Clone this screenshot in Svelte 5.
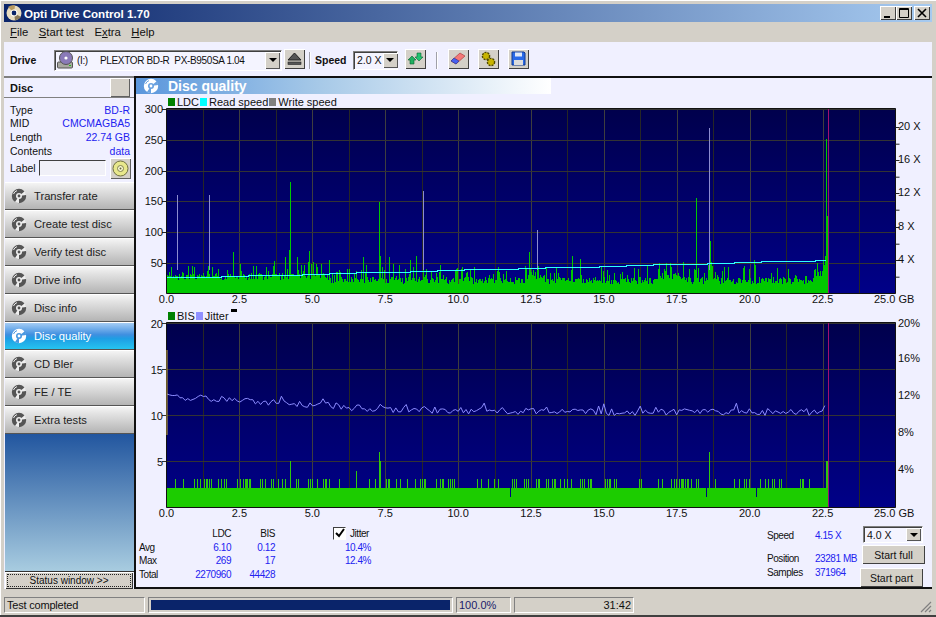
<script>
    // seeded so both charts come out the same on every render
    function rng(seed) {
        return () => {
            seed = (seed + 0x6d2b79f5) | 0;
            let t = Math.imul(seed ^ (seed >>> 15), 1 | seed);
            t = (t + Math.imul(t ^ (t >>> 7), 61 | t)) ^ t;
            return ((t ^ (t >>> 14)) >>> 0) / 4294967296;
        };
    }

    const left = 166.5, right = 895.5, endX = 828;
    const top1 = 108.5, bot1 = 293.5, top2 = 322.5, bot2 = 507.5;
    const gbX = (gb) => left + gb * 29.16;

    const gridV = Array.from({ length: 19 }, (_, i) => ({ x: Math.round(gbX((i + 1) * 1.25)) + 0.5, major: i % 2 === 1 }));
    const xLabels = ['0.0', '2.5', '5.0', '7.5', '10.0', '12.5', '15.0', '17.5', '20.0', '22.5'].map((t, i) => ({ t, x: gbX(i * 2.5) }));

    const ldcTicks = [50, 100, 150, 200, 250, 300].map((v) => ({ v, y: Math.round(bot1 - v * 0.615) + 0.5 }));
    const speedTicks = [4, 8, 12, 16, 20].map((v) => ({ v, y: Math.round(bot1 - v * 8.34) + 0.5 }));
    const bisTicks = [5, 10, 15, 20].map((v) => ({ v, y: Math.round(bot2 - v * 9.25) + 0.5 }));
    const jitterTicks = [4, 8, 12, 16, 20].map((v) => ({ v, y: Math.round(bot2 - v * 9.25) + (v === 20 ? 4 : 1.5) }));

    function buildLdc() {
        const r = rng(17);
        let d = '';
        const spikes = { 290: 180, 289: 70, 379: 148, 380: 60, 696: 155, 709: 85, 710: 85, 711: 50, 708: 45, 825: 60, 826: 250, 827: 125, 537: 40, 285: 58, 274: 52, 278: 28, 393: 30, 423: 40, 535: 22, 419: 26, 595: 26, 665: 36, 662: 32, 650: 25, 806: 28 };
        for (let x = 167; x < 828; x++) {
            let h = 9 + r() * 7;
            const p = r();
            if (p > 0.96) h += 14 + r() * 14;
            else if (p > 0.75) h += 5 + r() * 9;
            if (x < 330) h += 4;
            if (x > 525 && x < 545) h += 4;
            if (x > 655 && x < 685) h += 4;
            if (x > 815) h += 7;
            if (spikes[x]) h = spikes[x] * 0.615 > h ? spikes[x] * 0.615 : h;
            d += `M${x + 0.5} 293V${(293 - h).toFixed(0)}`;
        }
        return d;
    }

    const paleLines = [
        { x: 177.5, y: 195 }, { x: 209.5, y: 195 }, { x: 423.5, y: 191 },
        { x: 537.5, y: 230 }, { x: 709.5, y: 128 }
    ];

    function buildSpeed() {
        let d = `M167 277`;
        let y = 277.5, x = 167;
        while (x < 826) {
            const next = Math.min(x + 25 + (x % 3), 826);
            d += `H${next}`;
            x = next;
            y -= 0.73;
            if (x < 826) d += `V${Math.round(y) + 0.5}`;
        }
        return d;
    }

    function buildBis() {
        const r = rng(5);
        const tall = { 290: 461, 356: 471, 379: 452, 380: 461, 709: 452 };
        const notch = [266, 279, 706, 756, 510, 640];
        let base = '', high = '';
        let run = 0;
        for (let x = 167; x < 828; x++) {
            if (x >= 826) {
                high += `M${x + 0.5} 488V461`;
                base += `M${x + 0.5} 507V488`;
                continue;
            }
            base += `M${x + 0.5} 507V${notch.includes(x) ? 497 : 488}`;
            if (tall[x]) high += `M${x + 0.5} 488V${tall[x]}`;
            else if (run > 0) {
                high += `M${x + 0.5} 488V479`;
                run--;
            } else if (r() > 0.8) {
                high += `M${x + 0.5} 488V479`;
                run = r() > 0.6 ? 1 + Math.floor(r() * 2) : 0;
                x += 1;
                base += `M${x + 0.5} 507V488`;
            }
        }
        return { base, high };
    }

    function buildJitter() {
        const r = rng(29);
        let pts = [];
        for (let x = 167; x <= 825; x += 2.6) {
            let mid = x < 380 ? 396 + (x - 167) * 0.061 : x < 560 ? 409 + (x - 380) * 0.017 : 412;
            let y = mid + (r() - 0.5) * 7;
            if (r() > 0.93) y -= 3 + r() * 3;
            pts.push(`${x.toFixed(1)},${y.toFixed(1)}`);
        }
        return pts.join(' ');
    }

    const ldcPath = buildLdc();
    const speedPath = buildSpeed();
    const bis = buildBis();
    const jitterPts = buildJitter();

    const discInfo = [
        { label: 'Type', value: 'BD-R' },
        { label: 'MID', value: 'CMCMAGBA5' },
        { label: 'Length', value: '22.74 GB' },
        { label: 'Contents', value: 'data' }
    ];

    const tests = ['Transfer rate', 'Create test disc', 'Verify test disc', 'Drive info', 'Disc info', 'Disc quality', 'CD Bler', 'FE / TE', 'Extra tests'];
    const current = 'Disc quality';

    const stats = [
        { label: '', ldc: 'LDC', bis: 'BIS', head: true },
        { label: 'Avg', ldc: '6.10', bis: '0.12' },
        { label: 'Max', ldc: '269', bis: '17' },
        { label: 'Total', ldc: '2270960', bis: '44428' }
    ];
</script>

<style>
    :global(body) {
        margin: 0;
        background: #d4d0c8;
    }

    .window {
        box-sizing: border-box;
        display: flex;
        flex-direction: column;
        width: 936px;
        height: 617px;
        padding: 4px 4px 4px 4px;
        overflow: hidden;

        font-family: "Liberation Sans", Arial, sans-serif;
        font-size: 11px;
        color: #111;
        background: #d4d0c8;
        border-bottom: 2px solid #404040;
        box-shadow: inset 1px 1px 0 #fff;
    }

    .titlebar {
        flex: 0 0 18px;
        display: flex;
        align-items: center;
        gap: 2px;
        padding-left: 2px;

        font-size: 11.6px;
        font-weight: bold;
        color: #fff;
        background: linear-gradient(to right, #0a246a, #a6caf0);
    }
    .titlebar .name {
        flex: 1 1 auto;
    }
    .winbtns {
        display: flex;
        margin-right: 2px;
    }
    .winbtn {
        box-sizing: border-box;
        display: block;
        width: 16px;
        height: 14px;
        background: #d4d0c8;
        box-shadow: inset 1px 1px 0 #fff, inset -1px -1px 0 #404040;
    }
    .winbtn + .winbtn:last-child {
        margin-left: 2px;
    }

    .menubar {
        flex: 0 0 20px;
        display: flex;
        align-items: center;
        gap: 10.5px;
        padding-left: 6px;

        font-size: 11.3px;
    }
    .menubar u {
        text-decoration: underline;
    }

    .toolbar {
        flex: 0 0 34px;
        box-sizing: border-box;
        display: flex;
        align-items: center;
        padding: 2px 0 0 6px;

        background: #f0f0ff;
    }
    .toolbar b {
        font-size: 10.5px;
    }
    .driveLabel {
        width: 44px;
    }
    .speedLabel {
        width: 38px;
    }

    .combo {
        box-sizing: border-box;
        display: flex;
        align-items: center;
        background: #f4f4ff;
        border: 1px solid;
        border-color: #808080 #fff #fff #808080;
        box-shadow: inset 1px 1px 0 #404040;
        white-space: nowrap;
    }
    .drive {
        width: 228px;
        height: 21px;
        padding-left: 2px;
        gap: 4px;
        font-size: 10px;
        letter-spacing: -0.35px;
    }
    .drive svg {
        flex: 0 0 16px;
    }
    .drive span {
        flex: 1 1 auto;
        white-space: pre;
    }
    .speedCombo {
        width: 45px;
        height: 19px;
        padding-left: 3px;
        justify-content: space-between;
        font-size: 10.5px;
    }
    .arrow {
        flex: 0 0 15px;
        align-self: stretch;
        display: flex;
        align-items: center;
        justify-content: center;
        margin: 1px;
        background: #d4d0c8;
        box-shadow: inset 1px 1px 0 #fff, inset -1px -1px 0 #555;
    }
    .arrow i {
        width: 0;
        height: 0;
        border: 4px solid transparent;
        border-top: 4px solid #000;
        border-bottom: 0;
    }

    .tool {
        box-sizing: border-box;
        flex: 0 0 21px;
        display: flex;
        align-items: center;
        justify-content: center;
        width: 21px;
        height: 20px;
        margin-top: -3px;
        background: #d4d0c8;
        box-shadow: inset 1px 1px 0 #fff, inset -1px -1px 0 #404040;
    }
    .sep {
        width: 1px;
        height: 17px;
        background: #a0a0a8;
        box-shadow: 1px 0 0 #fff;
    }

    .body {
        flex: 0 0 513px;
        display: flex;
    }

    .sidebar {
        box-sizing: border-box;
        flex: 0 0 130px;
        display: flex;
        flex-direction: column;
        border-top: 2px solid #808080;
        background: #f0f0ff;
    }
    .discHead {
        box-sizing: border-box;
        flex: 0 0 20px;
        display: flex;
        align-items: center;
        justify-content: space-between;
        padding: 0 4px 0 6px;
        border-bottom: 1px solid #808080;
    }
    .discHead span {
        width: 20px;
        height: 19px;
        background: #d4d0c8;
        box-shadow: inset 1px 1px 0 #fff, inset -1px -1px 0 #606060;
    }
    .info {
        padding: 5.5px 4px 0 6px;
        height: 52.5px;
    }
    .info div {
        display: flex;
        justify-content: space-between;
        height: 13.7px;
        line-height: 13.7px;
        font-size: 10.5px;
    }
    .info .val {
        color: #2222f0;
    }
    .labelRow {
        flex: 0 0 24px;
        display: flex;
        align-items: center;
        padding-left: 6px;
        font-size: 10.5px;
    }
    .labelInput {
        box-sizing: border-box;
        width: 67px;
        height: 16px;
        border: 1px solid;
        border-color: #404040 #fff #fff #404040;
        background: #f0f0f8;
        margin-left: 3px;
    }
    .discBtn {
        width: 21px;
        height: 21px;
        margin-left: 4px;
        display: flex;
        align-items: center;
        justify-content: center;
        background: #d4d0c8;
        box-shadow: inset 1px 1px 0 #fff, inset -1px -1px 0 #606060;
    }

    .nav {
        display: flex;
        flex-direction: column;
        padding: 2px 0 0 1px;
    }
    .nav div {
        box-sizing: border-box;
        display: flex;
        align-items: center;
        height: 28px;
        padding-left: 6px;
        gap: 7px;

        font-size: 11.2px;
        color: #222;
        background: linear-gradient(to bottom, #f4f4f4, #e0e0e0 30%, #b4b4b4);
        border-bottom: 1px solid #555;
        border-top: 1px solid #fff;
    }
    .nav div.active {
        color: #fff;
        background: linear-gradient(to bottom, #a4ccf4, #3f8fe0 45%, #1e9ee4 60%, #26c4f0);
    }

    .fill {
        flex: 1 1 auto;
        margin-left: 1px;
        background: linear-gradient(to bottom, #22569f, #a8cce0);
        border-bottom: 1px solid #333;
    }
    .statusWindow {
        box-sizing: border-box;
        flex: 0 0 17px;
        display: flex;
        align-items: center;
        justify-content: center;
        margin: 0 1px 0 1px;

        font-size: 10px;
        background: #d4d0c8;
        box-shadow: inset 1px 1px 0 #fff, inset -1px -1px 0 #333;
        outline: 1px dotted #222;
        outline-offset: -3px;
    }

    .main {
        box-sizing: border-box;
        flex: 1 1 auto;
        display: flex;
        flex-direction: column;
        min-width: 0;
        background: #f0f0ff;
        border-left: 2px solid #111;
        border-top: 2px solid #111;
        border-bottom: 2px solid #111;
    }
    .bar {
        flex: 0 0 16px;
        display: flex;
        align-items: center;
        gap: 9px;
        width: 415px;
        padding-left: 7px;
        box-sizing: border-box;

        font-size: 14px;
        font-weight: bold;
        color: #fff;
        background: linear-gradient(to right, #5a96dc, #a8cae8 45%, #fff);
    }
    .legend {
        position: relative;
        box-sizing: border-box;
        flex: 0 0 14px;
        display: flex;
        align-items: center;
        padding: 2px 0 0 32px;
        font-size: 11px;
        color: #111;
    }
    .legend i {
        width: 7px;
        height: 8px;
        margin-right: 2px;
    }
    .legend span {
        margin-right: 1px;
    }
    .marker {
        position: absolute;
        left: 95px;
        top: 1px;
        width: 6px;
        height: 3px;
        background: #000;
    }
    svg.chart {
        display: block;
        flex: 0 0 200px;
        overflow: visible;
    }
    .axis {
        font-family: "Liberation Sans", Arial, sans-serif;
        font-size: 11px;
        fill: #111;
    }

    .stats {
        flex: 1 1 auto;
        display: flex;
        padding: 5px 7px 0 3px;
        font-size: 10px;
        letter-spacing: -0.45px;
    }
    .table {
        display: grid;
        grid-template-columns: 36px 56px 44px;
        grid-auto-rows: 13.7px;
        line-height: 13.7px;
    }
    .table .num {
        text-align: right;
        color: #2222f0;
    }
    .table .num.head {
        color: #111;
    }
    .jitter {
        width: 38px;
        margin-left: 58px;
        display: flex;
        flex-direction: column;
        line-height: 13.7px;
    }
    .jitter .check {
        display: flex;
        align-items: center;
        gap: 4px;
        height: 13.7px;
        white-space: nowrap;
    }
    .box {
        box-sizing: border-box;
        flex: 0 0 13px;
        width: 13px;
        height: 13px;
        display: flex;
        background: #fff;
        border: 1px solid;
        border-color: #404040 #fff #fff #404040;
    }
    .jitter .pct {
        text-align: right;
        color: #2222f0;
    }
    .readout {
        margin-left: auto;
        width: 93px;
        padding-top: 2px;
    }
    .readout div {
        display: grid;
        grid-template-columns: 48px 1fr;
        height: 14px;
        line-height: 14px;
        white-space: nowrap;
    }
    .readout div.gap {
        margin-top: 9px;
    }
    .readout .val {
        color: #2222f0;
    }
    .controls {
        width: 65px;
        display: flex;
        flex-direction: column;
        align-items: flex-start;
        letter-spacing: 0;
    }
    .rateCombo {
        width: 60px;
        height: 17px;
        margin: -1px 0 0 3px;
        padding-left: 3px;
        justify-content: space-between;
        font-size: 10.5px;
    }
    .push {
        box-sizing: border-box;
        display: flex;
        align-items: center;
        justify-content: center;
        width: 63px;
        height: 19px;
        font-size: 10.5px;
        background: #d4d0c8;
        box-shadow: inset 1px 1px 0 #fff, inset -1px -1px 0 #404040;
    }
    .push.full {
        margin: 2px 0 0 2px;
    }
    .push.part {
        margin-top: 4px;
    }

    .status {
        flex: 0 0 16px;
        display: flex;
        margin-top: 8px;
        gap: 3px;
        font-size: 11px;
    }
    .panel {
        box-sizing: border-box;
        display: flex;
        align-items: center;
        padding: 0 2px;
        border: 1px solid;
        border-color: #808080 #fff #fff #808080;
        white-space: nowrap;
    }
    .pTest { width: 141px; letter-spacing: -0.2px; }
    .pBar { width: 305px; padding: 2px; }
    .pBar i {
        display: block;
        width: 100%;
        height: 100%;
        background: #0a246a;
    }
    .pPct { width: 55px; color: #1a1a6a; }
    .pTime { width: 120px; justify-content: flex-end; }
    .grip {
        margin-left: auto;
        align-self: flex-end;
    }
</style>

{#snippet disc(color = '#555', gap = '#eee')}
    <svg width="16" height="16" viewBox="0 0 16 16">
        <circle cx="8" cy="8" r="7.2" fill={color} />
        <path d="M8 8 L14 3 A7 7 0 0 1 15 7 Z M8 8 L4 14 A7 7 0 0 0 8 15 Z" fill={gap} />
        <circle cx="8" cy="8" r="3" fill={gap} />
        <circle cx="8" cy="8" r="1.4" fill={color} />
        <path d="M2.5 6 A6 6 0 0 1 6 2.6" stroke={gap} stroke-width="1" fill="none" />
    </svg>
{/snippet}

<div class="window">
    <div class="titlebar">
        <svg width="16" height="16" viewBox="0 0 16 16">
            <circle cx="8" cy="8" r="7.5" fill="#e8dcc0" />
            <path d="M8 8 L2 2 A8 8 0 0 1 9 .5 Z" fill="#b89a60" />
            <path d="M8 8 L15 12 A8 8 0 0 1 9 15.5 Z" fill="#8a7a5a" />
            <circle cx="8" cy="8" r="2.4" fill="#0a246a" />
            <circle cx="8" cy="8" r="3.2" fill="none" stroke="#fff" />
        </svg>
        <span class="name">Opti Drive Control 1.70</span>
        <div class="winbtns">
            <span class="winbtn"><svg width="16" height="14"><rect x="4" y="10" width="6" height="2" fill="#000" /></svg></span>
            <span class="winbtn"><svg width="16" height="14"><path d="M3.5 2.5h9v9h-9zM3 3.5h10" fill="none" stroke="#000" /></svg></span>
            <span class="winbtn"><svg width="16" height="14"><path d="M4 3l8 8M12 3l-8 8" stroke="#000" stroke-width="1.6" /></svg></span>
        </div>
    </div>

    <div class="menubar">
        <span><u>F</u>ile</span>
        <span><u>S</u>tart test</span>
        <span>E<u>x</u>tra</span>
        <span><u>H</u>elp</span>
    </div>

    <div class="toolbar">
        <b class="driveLabel">Drive</b>
        <div class="combo drive">
            <svg width="16" height="18" viewBox="0 0 16 18">
                <rect x="0.5" y="11" width="15" height="6" rx="1" fill="#a8a8a0" stroke="#555" />
                <circle cx="9" cy="7" r="6.5" fill="#8a7ab8" stroke="#555" />
                <circle cx="9" cy="7" r="1.6" fill="#fff" />
                <rect x="12" y="14" width="2" height="1" fill="#20c020" />
            </svg>
            <span>(I:)     PLEXTOR BD-R  PX-B950SA 1.04</span>
            <div class="arrow"><i></i></div>
        </div>
        <div class="tool" style="margin-left: 2px">
            <svg width="15" height="13" viewBox="0 0 15 13"><path d="M7.5 1L14 8H1z" fill="#555" stroke="#222" /><rect x="1" y="10" width="13" height="2.5" fill="#555" stroke="#222" stroke-width=".6" /></svg>
        </div>
        <div class="sep" style="margin: 0 5px 0 4px"></div>
        <b class="speedLabel">Speed</b>
        <div class="combo speedCombo">2.0 X<div class="arrow"><i></i></div></div>
        <div class="tool" style="margin-left: 7px">
            <svg width="17" height="15" viewBox="0 0 17 15">
                <path d="M1 9l4-4 4 4H7v4H3V9z" fill="#1fb060" stroke="#0a6030" stroke-width=".6" />
                <path d="M16 6l-4 4-4-4h2V2h4v4z" fill="#22c470" stroke="#0a6030" stroke-width=".6" />
            </svg>
        </div>
        <div class="sep" style="margin: 0 11px 0 10px"></div>
        <div class="tool">
            <svg width="17" height="15" viewBox="0 0 17 15">
                <path d="M1 10L10 2l5 3-9 8z" fill="#f47878" stroke="#a03030" stroke-width=".6" />
                <path d="M1 10l5 3 3-3-5-3z" fill="#4860f0" stroke="#203090" stroke-width=".6" />
            </svg>
        </div>
        <div class="tool" style="margin-left: 9px">
            <svg width="17" height="16" viewBox="0 0 17 16">
                <circle cx="6" cy="5" r="3.6" fill="#c8b400" stroke="#504800" stroke-width="1.4" stroke-dasharray="2 1" />
                <circle cx="11" cy="11" r="3.6" fill="#c8b400" stroke="#504800" stroke-width="1.4" stroke-dasharray="2 1" />
            </svg>
        </div>
        <div class="tool" style="margin-left: 9px">
            <svg width="15" height="15" viewBox="0 0 15 15">
                <path d="M1 1h12l1 1v12H1z" fill="#2a6ae8" stroke="#123a90" />
                <rect x="4" y="1.5" width="7" height="4" fill="#dfe8f8" />
                <rect x="3" y="9" width="9" height="5" fill="#dcdcdc" />
            </svg>
        </div>
    </div>

    <div class="body">
        <div class="sidebar">
            <div class="discHead"><b>Disc</b><span></span></div>
            <div class="info">
                {#each discInfo as row}
                    <div><span>{row.label}</span><span class="val">{row.value}</span></div>
                {/each}
            </div>
            <div class="labelRow">
                Label
                <div class="labelInput"></div>
                <div class="discBtn">
                    <svg width="17" height="17" viewBox="0 0 17 17">
                        <circle cx="8.5" cy="8.5" r="7.5" fill="#e8e88c" stroke="#707040" />
                        <circle cx="8.5" cy="8.5" r="3" fill="#fafad0" stroke="#808050" />
                        <circle cx="8.5" cy="8.5" r="1" fill="#606040" />
                    </svg>
                </div>
            </div>
            <div class="nav">
                {#each tests as test}
                    <div class:active={test === current}>
                        {#if test === current}
                            {@render disc('#fff', '#4a98e0')}
                        {:else}
                            {@render disc()}
                        {/if}
                        <span>{test}</span>
                    </div>
                {/each}
            </div>
            <div class="fill"></div>
            <div class="statusWindow">Status window &gt;&gt;</div>
        </div>

        <div class="main">
            <div class="bar">
                {@render disc('#fff', '#6aa2e0')}
                <span>Disc quality</span>
            </div>

            <div class="legend">
                <i style="background: #008000"></i><span>LDC</span>
                <i style="background: #00ffff"></i><span>Read speed</span>
                <i style="background: #808080"></i><span>Write speed</span>
            </div>

            <svg class="chart" width="796" height="200" viewBox="136 108 796 200">
                <defs>
                    <linearGradient id="plotA" x1="0" y1="0" x2="0" y2="1">
                        <stop offset="0" stop-color="#00004c" />
                        <stop offset="1" stop-color="#000088" />
                    </linearGradient>
                </defs>
                <rect x={left} y={top1} width={right - left} height={bot1 - top1} fill="url(#plotA)" />
                {#each gridV as g}
                    <line x1={g.x} x2={g.x} y1={top1} y2={bot1} stroke={g.major ? '#3e3e3e' : '#262626'} />
                {/each}
                {#each ldcTicks as t}
                    <line x1="162" x2={right} y1={t.y} y2={t.y} stroke="#333" />
                    <line x1="162" x2={left} y1={t.y} y2={t.y} stroke="#222" />
                    <text class="axis" x="163" y={t.y + 3} text-anchor="end">{t.v}</text>
                {/each}
                <path d={ldcPath} stroke="#00c800" fill="none" shape-rendering="crispEdges" />
                {#each paleLines as p}
                    <line x1={p.x} x2={p.x} y1={p.y} y2="270" stroke="#8c8cd0" />
                {/each}
                <path d={speedPath} stroke="#30ffff" fill="none" shape-rendering="crispEdges" />
                <line x1={endX + 0.5} x2={endX + 0.5} y1={top1} y2={bot1} stroke="#a01070" />
                <path d="M{left} {top1}H{right}V{bot1}H{left}Z" fill="none" stroke="#111" />
                {#each speedTicks as t}
                    <line x1={right} x2={right + 4} y1={t.y} y2={t.y} stroke="#222" />
                    <line x1={right} x2={right + 4} y1={t.y + 16.7} y2={t.y + 16.7} stroke="#222" />
                    <text class="axis" x="898" y={t.y + 2}>{t.v} X</text>
                {/each}
                {#each xLabels as l}
                    <text class="axis" x={l.x} y="303" text-anchor="middle">{l.t}</text>
                {/each}
                <text class="axis" x="874" y="303">25.0 GB</text>
            </svg>

            <div class="legend">
                <i style="background: #008000"></i><span>BIS</span>
                <i style="background: #9090ff"></i><span>Jitter</span>
                <div class="marker"></div>
            </div>

            <svg class="chart" width="796" height="200" viewBox="136 322 796 200">
                <defs>
                    <linearGradient id="plotB" x1="0" y1="0" x2="0" y2="1">
                        <stop offset="0" stop-color="#00004c" />
                        <stop offset="1" stop-color="#000088" />
                    </linearGradient>
                </defs>
                <rect x={left} y={top2} width={right - left} height={bot2 - top2} fill="url(#plotB)" />
                {#each gridV as g}
                    <line x1={g.x} x2={g.x} y1={top2} y2={bot2} stroke={g.major ? '#3e3e3e' : '#262626'} />
                {/each}
                {#each bisTicks as t}
                    <line x1="162" x2={right} y1={t.y} y2={t.y} stroke="#333" />
                    <text class="axis" x="163" y={t.y + 4} text-anchor="end">{t.v}</text>
                {/each}
                <path d={bis.base} stroke="#1ccc00" stroke-width="1" fill="none" shape-rendering="crispEdges" />
                <path d={bis.high} stroke="#2ec80c" fill="none" shape-rendering="crispEdges" />
                <polyline points={jitterPts} stroke="#8c8cff" fill="none" />
                <line x1={endX + 0.5} x2={endX + 0.5} y1={top2} y2={bot2} stroke="#a01070" />
                <path d="M{left} {top2}H{right}V{bot2}H{left}Z" fill="none" stroke="#111" />
                <line x1={left + 0.5} x2={left + 0.5} y1="350" y2="435" stroke="#c8a838" />
                {#each jitterTicks as t}
                    <text class="axis" x="898" y={t.y}>{t.v}%</text>
                {/each}
                {#each xLabels as l}
                    <text class="axis" x={l.x} y="517" text-anchor="middle">{l.t}</text>
                {/each}
                <text class="axis" x="874" y="517">25.0 GB</text>
            </svg>

            <div class="stats">
                <div class="table">
                    {#each stats as row}
                        <span>{row.label}</span>
                        <span class="num" class:head={row.head}>{row.ldc}</span>
                        <span class="num" class:head={row.head}>{row.bis}</span>
                    {/each}
                </div>
                <div class="jitter">
                    <div class="check">
                        <span class="box">
                            <svg width="11" height="11" viewBox="0 0 11 11"><path d="M2 5l3 3 5-7" stroke="#000" stroke-width="2" fill="none" /></svg>
                        </span>
                        Jitter
                    </div>
                    <div class="pct">10.4%</div>
                    <div class="pct">12.4%</div>
                </div>
                <div class="readout">
                    <div><span>Speed</span><span class="val">4.15 X</span></div>
                    <div class="gap"><span>Position</span><span class="val">23281 MB</span></div>
                    <div><span>Samples</span><span class="val">371964</span></div>
                </div>
                <div class="controls">
                    <div class="combo rateCombo">4.0 X<div class="arrow"><i></i></div></div>
                    <div class="push full">Start full</div>
                    <div class="push part">Start part</div>
                </div>
            </div>
        </div>
    </div>

    <div class="status">
        <div class="panel pTest">Test completed</div>
        <div class="panel pBar"><i></i></div>
        <div class="panel pPct">100.0%</div>
        <div class="panel pTime">31:42</div>
        <svg class="grip" width="13" height="13" viewBox="0 0 13 13">
            <path d="M12 2L2 12M12 6L6 12M12 10L10 12" stroke="#808080" stroke-width="1.2" />
        </svg>
    </div>
</div>
